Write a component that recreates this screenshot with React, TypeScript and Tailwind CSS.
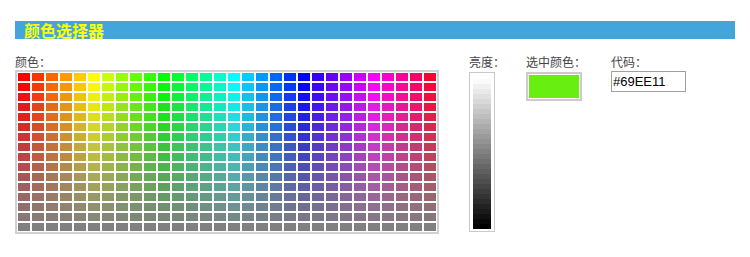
import React from "react";

const COLS = 30;
const ROWS = 16;
const BANDS = 30;

function cellColor(col: number, row: number) {
  const h = col * 12;
  const s = 100 - (row * 100) / (ROWS - 1);
  return `hsl(${h}, ${s}%, 50%)`;
}

function bandColor(i: number) {
  const v = Math.round(250 - (i * 250) / (BANDS - 1));
  return `rgb(${v}, ${v}, ${v})`;
}

const label = "h-[14px] text-[12px] leading-[14px] text-[#444] whitespace-nowrap";

export default function App() {
  return (
    <div className="w-[750px] h-[257px] bg-white pt-[21px] px-[15px] font-['Noto_Sans_CJK_SC',sans-serif]">
      {/* title bar */}
      <div className="h-[18px] bg-[#42a6dd] pl-[9px] flex items-center">
        <span className="text-[16px] leading-[18px] font-bold text-[#ffff00]">颜色选择器</span>
      </div>

      <div className="flex items-start mt-[16px]">
        {/* colour grid */}
        <div className="flex flex-col">
          <div className={label}>颜色：</div>
          <div className="mt-[1px] border-2 border-[#d0d0d0] p-px grid grid-cols-[repeat(30,12px)] gap-x-[2px] gap-y-[2px]">
            {Array.from({ length: ROWS }).map((_, r) =>
              Array.from({ length: COLS }).map((_, c) => (
                <div key={`${r}-${c}`} className="w-[12px] h-[8px]" style={{ background: cellColor(c, r) }} />
              ))
            )}
          </div>
        </div>

        {/* brightness */}
        <div className="flex flex-col w-[26px] ml-[30px]">
          <div className={label}>亮度：</div>
          <div className="mt-[3px] w-[26px] h-[160px] border border-[#c8c8c8] px-[3px] pt-[6px] pb-[2px] flex flex-col">
            {Array.from({ length: BANDS }).map((_, i) => (
              <div key={i} className="h-[5px] w-full" style={{ background: bandColor(i) }} />
            ))}
          </div>
        </div>

        {/* selected colour */}
        <div className="flex flex-col w-[56px] ml-[31px]">
          <div className={label}>选中颜色：</div>
          <div className="mt-[3px] w-[56px] h-[29px] border-2 border-[#cccccc] p-px">
            <div className="w-full h-full bg-[#69ee11]" />
          </div>
        </div>

        {/* code */}
        <div className="flex flex-col ml-[29px]">
          <div className={label}>代码：</div>
          <input
            readOnly
            value="#69EE11"
            className="mt-[2px] w-[75px] h-[21px] border border-[#a0a0a0] px-[1px] text-[13px] text-black font-['Liberation_Sans',Arial,sans-serif] outline-none"
          />
        </div>
      </div>
    </div>
  );
}
